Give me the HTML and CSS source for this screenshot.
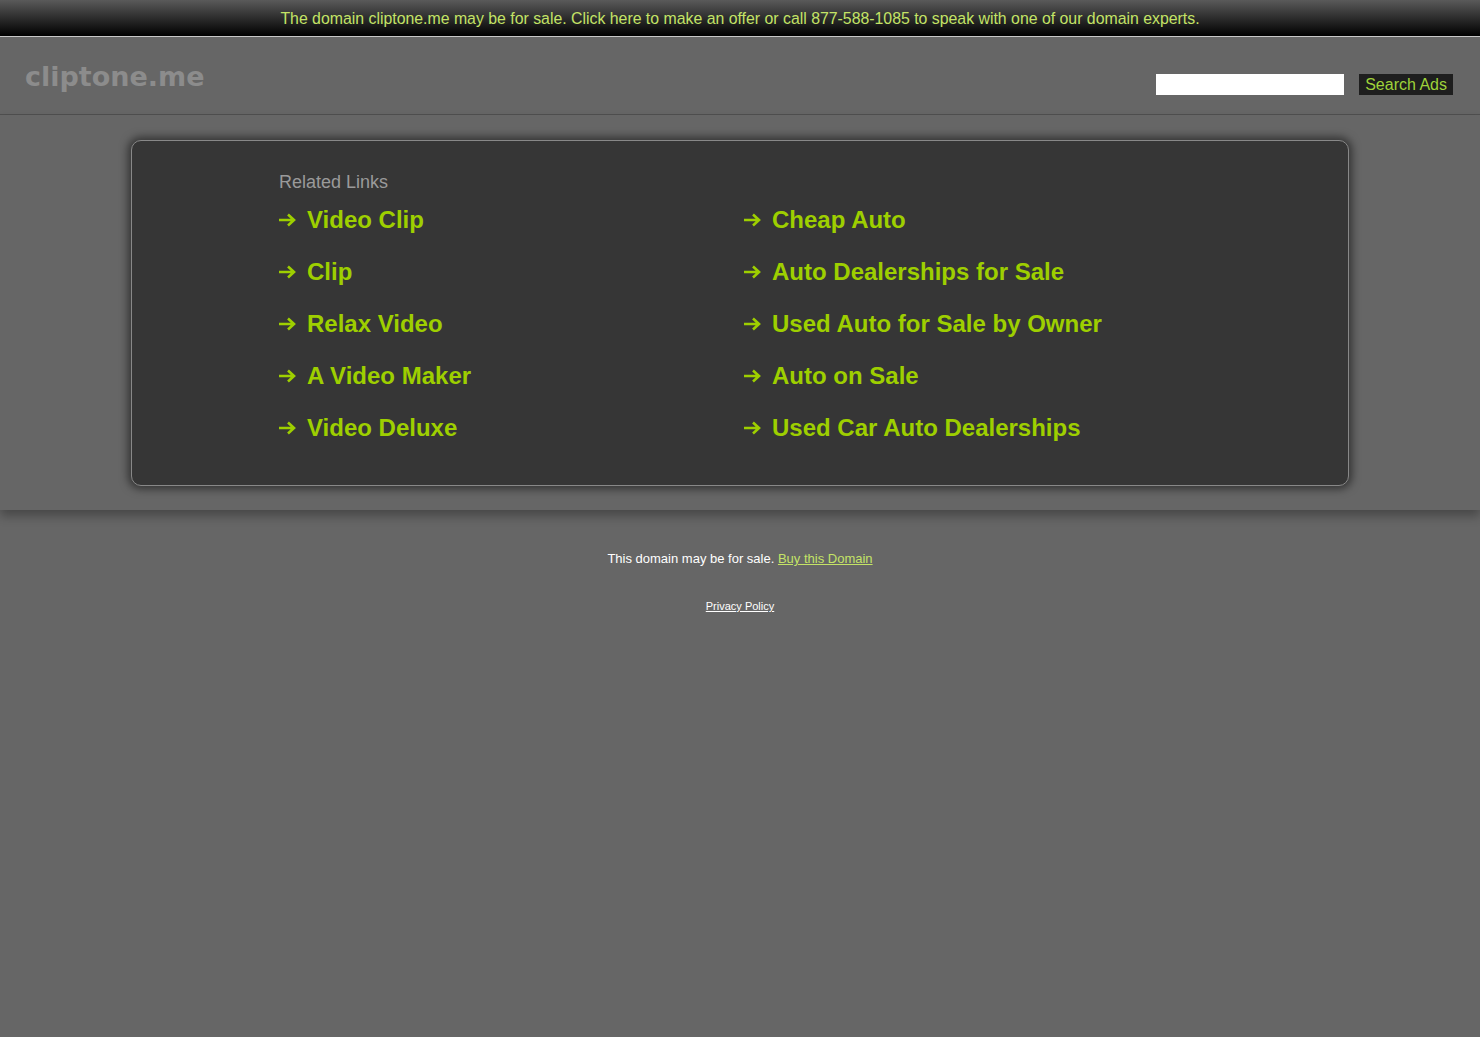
FILE: index.html
```html
<!DOCTYPE html>
<html lang="en">
<head>
  <meta charset="UTF-8" />
  <title>cliptone.me</title>
  <link rel="stylesheet" href="styles.css">
</head>
<body>
  <!-- sale banner -->
  <div class="topbar">
    <a href="#">The domain cliptone.me may be for sale. Click here to make an offer or call 877-588-1085 to speak with one of our domain experts.</a>
  </div>

  <div class="header">
    <div class="logo">cliptone.me</div>
    <form class="search">
      <input type="text" />
      <button type="button">Search Ads</button>
    </form>
  </div>

  <div class="main">
    <div class="card">
      <div class="links">
        <h3>Related Links</h3>
        <div class="grid">
          <a class="link" href="#"><svg viewBox="0 0 18 14"><path d="M1 7H16M10 1.5L16 7L10 12.5"/></svg>Video Clip</a>
          <a class="link" href="#"><svg viewBox="0 0 18 14"><path d="M1 7H16M10 1.5L16 7L10 12.5"/></svg>Cheap Auto</a>
          <a class="link" href="#"><svg viewBox="0 0 18 14"><path d="M1 7H16M10 1.5L16 7L10 12.5"/></svg>Clip</a>
          <a class="link" href="#"><svg viewBox="0 0 18 14"><path d="M1 7H16M10 1.5L16 7L10 12.5"/></svg>Auto Dealerships for Sale</a>
          <a class="link" href="#"><svg viewBox="0 0 18 14"><path d="M1 7H16M10 1.5L16 7L10 12.5"/></svg>Relax Video</a>
          <a class="link" href="#"><svg viewBox="0 0 18 14"><path d="M1 7H16M10 1.5L16 7L10 12.5"/></svg>Used Auto for Sale by Owner</a>
          <a class="link" href="#"><svg viewBox="0 0 18 14"><path d="M1 7H16M10 1.5L16 7L10 12.5"/></svg>A Video Maker</a>
          <a class="link" href="#"><svg viewBox="0 0 18 14"><path d="M1 7H16M10 1.5L16 7L10 12.5"/></svg>Auto on Sale</a>
          <a class="link" href="#"><svg viewBox="0 0 18 14"><path d="M1 7H16M10 1.5L16 7L10 12.5"/></svg>Video Deluxe</a>
          <a class="link" href="#"><svg viewBox="0 0 18 14"><path d="M1 7H16M10 1.5L16 7L10 12.5"/></svg>Used Car Auto Dealerships</a>
        </div>
      </div>
    </div>
  </div>

  <div class="footer">
    <p class="sale">This domain may be for sale. <a href="#">Buy this Domain</a></p>
    <p class="privacy"><a href="#">Privacy Policy</a></p>
  </div>
</body>
</html>
```

FILE: styles.css
```css
body {
  margin: 0;
  background-color: #666666;
  font-family: "Liberation Sans", Arial, sans-serif;
}

a {
  text-decoration: none;
}

.topbar {
  height: 36px;
  line-height: 38px;
  text-align: center;
  font-size: 15.85px;
  background: linear-gradient(#5a5a5a, #000000);
  border-bottom: 1px solid #c8c8c8;
}

.topbar a {
  color: #c4e366;
}

.header {
  height: 77px;
  display: flex;
  justify-content: space-between;
  align-items: flex-start;
  padding: 0 27px 0 25px;
  border-bottom: 1px solid #505050;
}

.logo {
  margin-top: 24px;
  font-family: "DejaVu Sans", Verdana, sans-serif;
  font-weight: bold;
  font-size: 27px;
  color: #8c8c8c;
}

.search {
  margin-top: 37px;
  display: flex;
  gap: 15px;
}

.search input {
  width: 188px;
  height: 21px;
  padding: 0;
  border: none;
  background-color: #ffffff;
  box-sizing: border-box;
}

.search button {
  height: 21px;
  padding: 0 6px;
  border: none;
  background-color: #1e1e1e;
  color: #9fd23a;
  font-family: "Liberation Sans", Arial, sans-serif;
  font-size: 16px;
  line-height: 21px;
}

.main {
  padding: 25px 0 24px;
  position: relative;
  box-shadow: 0 6px 10px rgba(0, 0, 0, 0.3);
}

.card {
  width: 1216px;
  height: 344px;
  margin: 0 auto;
  background-color: #363636;
  border: 1px solid #888888;
  border-radius: 10px;
  box-shadow: 0 0 8px 3px rgba(0, 0, 0, 0.5);
}

.links {
  padding: 31px 0 0 146px;
}

.links h3 {
  margin: 0 0 1px 1px;
  font-weight: normal;
  font-size: 18px;
  color: #9a9a9a;
}

.grid {
  display: grid;
  grid-template-columns: 465px 465px;
}

.link {
  display: flex;
  align-items: center;
  height: 52px;
  font-weight: bold;
  font-size: 24px;
  color: #9ecf00;
}

.link svg {
  width: 18px;
  height: 14px;
  margin-right: 11px;
  fill: none;
  stroke: #9ecf00;
  stroke-width: 2.6;
}

.footer {
  padding-top: 41px;
  text-align: center;
}

.sale {
  margin: 0;
  font-size: 13px;
  color: #ffffff;
}

.sale a {
  color: #c4e366;
  text-decoration: underline;
}

.privacy {
  margin: 34px 0 0;
  font-size: 11px;
}

.privacy a {
  color: #ffffff;
  text-decoration: underline;
}
```
